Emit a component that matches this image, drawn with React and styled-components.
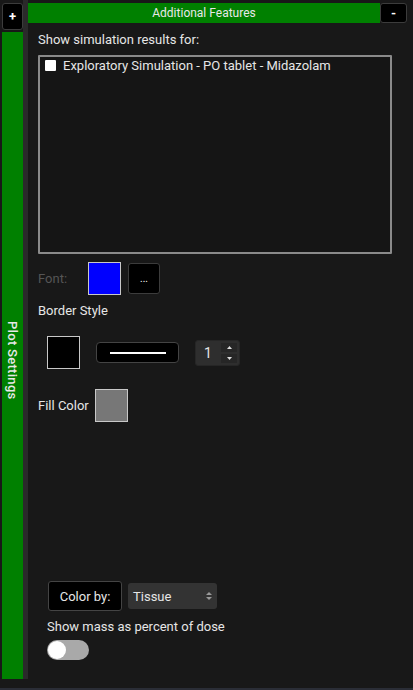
import React, { useState } from "react";
import styled, { createGlobalStyle } from "styled-components";

const GlobalStyle = createGlobalStyle`
  html, body {
    margin: 0;
    padding: 0;
    background: #181818;
  }
  body {
    font-family: Roboto, "Liberation Sans", sans-serif;
    color: #e6e6e6;
  }
`;

const Window = styled.div`
  display: flex;
  width: 413px;
  height: 690px;
  background: #181818;
  border-bottom: 2px solid #2a2d36;
  box-sizing: border-box;
  overflow: hidden;
`;

const SideColumn = styled.div`
  display: flex;
  flex-direction: column;
  width: 23px;
  height: 679px;
  padding: 3px 0 0 2px;
  box-sizing: border-box;
  gap: 2px;
`;

const Strip = styled.div`
  width: 5px;
  height: 679px;
  background: #2a2a2a;
`;

const SmallButton = styled.button`
  display: flex;
  align-items: center;
  justify-content: center;
  width: ${(p) => p.$w}px;
  height: ${(p) => p.$h}px;
  padding: 0;
  background: #000;
  border: 1px solid #3c3c3c;
  border-radius: 3px;
  color: #fff;
  font-family: inherit;
  font-size: ${(p) => p.$fs || 13}px;
  font-weight: ${(p) => p.$fw || 700};
  flex-shrink: 0;
`;

const VerticalTab = styled.div`
  flex: 1;
  background: #008000;
  display: flex;
  justify-content: center;
  padding-top: 289px;
  box-sizing: border-box;
`;

const VerticalLabel = styled.span`
  writing-mode: vertical-rl;
  font-size: 13px;
  font-weight: 500;
  color: #e8e8e8;
  letter-spacing: 0.3px;
`;

const Main = styled.div`
  flex: 1;
  display: flex;
  flex-direction: column;
`;

const Header = styled.div`
  display: flex;
  margin-top: 3px;
  height: 20px;
  padding-right: 6px;
`;

const HeaderTitle = styled.div`
  flex: 1;
  background: #008000;
  display: flex;
  align-items: center;
  justify-content: center;
  font-size: 12px;
  color: #e8e8e8;
`;

const Content = styled.div`
  display: flex;
  flex-direction: column;
  padding: 9px 21px 0 10px;
`;

const Label = styled.div`
  font-size: 13px;
  line-height: 16px;
  color: ${(p) => (p.$dim ? "#555" : "#e6e6e6")};
  width: ${(p) => (p.$w ? `${p.$w}px` : "auto")};
  margin-top: ${(p) => p.$mt || 0}px;
  padding-left: ${(p) => p.$pl || 0}px;
`;

const ListBox = styled.div`
  margin-top: 7px;
  height: 199px;
  border: 2px solid #8a8a8a;
  border-radius: 1px;
  background: #151515;
  box-sizing: border-box;
  padding: 1px 5px;
`;

const ListItem = styled.label`
  display: flex;
  align-items: center;
  gap: 7px;
  font-size: 13px;
  color: #e6e6e6;
`;

const CheckBox = styled.span`
  width: 11px;
  height: 11px;
  background: #fff;
  border-radius: 1px;
  flex-shrink: 0;
`;

const Row = styled.div`
  display: flex;
  align-items: center;
  gap: ${(p) => p.$gap || 7}px;
  margin-top: ${(p) => p.$mt || 0}px;
  padding-left: ${(p) => p.$pl || 0}px;
`;

const Swatch = styled.div`
  width: 33px;
  height: 33px;
  box-sizing: border-box;
  border: 1px solid #c8c8c8;
  background: ${(p) => p.$color};
  flex-shrink: 0;
`;

const LineButton = styled.div`
  width: 83px;
  height: 21px;
  box-sizing: border-box;
  background: #000;
  border: 1px solid #444;
  border-radius: 4px;
  display: flex;
  align-items: center;
  justify-content: center;
`;

const LineSample = styled.div`
  width: 56px;
  height: 2px;
  background: #fff;
`;

const SpinBox = styled.div`
  display: flex;
  align-items: center;
  width: 45px;
  height: 26px;
  box-sizing: border-box;
  background: #2e2e2e;
  border: 1px solid #262626;
  border-radius: 3px;
  padding-left: 8px;
  font-size: 14px;
  color: #e6e6e6;
`;

const SpinArrows = styled.div`
  margin-left: auto;
  margin-right: 2px;
  display: flex;
  flex-direction: column;
  gap: 2px;
`;

const SpinArrow = styled.div`
  width: 16px;
  height: 9px;
  background: #262626;
  display: flex;
  align-items: center;
  justify-content: center;
`;

const ColorByButton = styled.div`
  width: 74px;
  height: 30px;
  box-sizing: border-box;
  background: #000;
  border: 1px solid #444;
  border-radius: 3px;
  display: flex;
  align-items: center;
  justify-content: center;
  font-size: 13px;
  color: #e6e6e6;
`;

const Select = styled.div`
  width: 89px;
  height: 26px;
  box-sizing: border-box;
  background: #333;
  border-radius: 3px;
  display: flex;
  align-items: center;
  padding: 0 5px;
  font-size: 13px;
  color: #e6e6e6;
  justify-content: space-between;
`;

const ToggleWrap = styled.div`
  padding-left: 9px;
`;

const Toggle = styled.div`
  width: 42px;
  height: 20px;
  border-radius: 10px;
  background: ${(p) => (p.$on ? "#2e7d32" : "#a9a9a9")};
  display: flex;
  align-items: center;
  padding: 1px;
  box-sizing: border-box;
  justify-content: ${(p) => (p.$on ? "flex-end" : "flex-start")};
  margin-top: 5px;
  cursor: pointer;
`;

const Knob = styled.div`
  width: 18px;
  height: 18px;
  border-radius: 50%;
  background: #fff;
`;

const Updown = () => (
  <svg width="6" height="10" viewBox="0 0 6 10">
    <path d="M0 4 L3 1 L6 4 Z" fill="#9a9a9a" />
    <path d="M0 6 L3 9 L6 6 Z" fill="#9a9a9a" />
  </svg>
);

const Tri = ({ down }) => (
  <svg width="5" height="3" viewBox="0 0 5 3">
    <path d={down ? "M0 0 L5 0 L2.5 3 Z" : "M0 3 L5 3 L2.5 0 Z"} fill="#ddd" />
  </svg>
);

export default function App() {
  const [on, setOn] = useState(false);
  return (
    <>
      <GlobalStyle />
      <Window>
        <SideColumn>
          <SmallButton $w={21} $h={27}>+</SmallButton>
          <VerticalTab>
            <VerticalLabel>Plot Settings</VerticalLabel>
          </VerticalTab>
        </SideColumn>
        <Strip />
        <Main>
          <Header>
            <HeaderTitle>Additional Features</HeaderTitle>
            <SmallButton $w={27} $h={20}>-</SmallButton>
          </Header>
          <Content>
            <Label>Show simulation results for:</Label>
            <ListBox>
              <ListItem>
                <CheckBox />
                Exploratory Simulation - PO tablet - Midazolam
              </ListItem>
            </ListBox>
            <Row $mt={8} $gap={7}>
              <Label $dim $w={43}>Font:</Label>
              <Swatch $color="#0000ff" />
              <SmallButton $w={32} $h={31} $fs={10} $fw={400}>...</SmallButton>
            </Row>
            <Label $mt={8}>Border Style</Label>
            <Row $mt={17} $pl={9} $gap={16}>
              <Swatch $color="#000" />
              <LineButton>
                <LineSample />
              </LineButton>
              <SpinBox>
                1
                <SpinArrows>
                  <SpinArrow><Tri /></SpinArrow>
                  <SpinArrow><Tri down /></SpinArrow>
                </SpinArrows>
              </SpinBox>
            </Row>
            <Row $mt={20} $gap={6}>
              <Label>Fill Color</Label>
              <Swatch $color="#777" />
            </Row>
            <Row $mt={159} $pl={10} $gap={6}>
              <ColorByButton>Color by:</ColorByButton>
              <Select>
                Tissue
                <Updown />
              </Select>
            </Row>
            <Label $mt={8} $pl={9}>Show mass as percent of dose</Label>
            <ToggleWrap>
              <Toggle $on={on} onClick={() => setOn(!on)}>
                <Knob />
              </Toggle>
            </ToggleWrap>
          </Content>
        </Main>
      </Window>
    </>
  );
}
